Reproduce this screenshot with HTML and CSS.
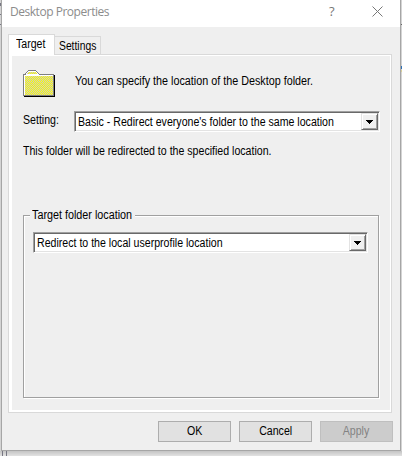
FILE: index.html
```
<!DOCTYPE html>
<html lang="en">
<head>
<meta charset="utf-8">
<title>Desktop Properties</title>
<link rel="stylesheet" href="styles.css">
</head>
<body>
<div class="dialog">
  <header class="titlebar">
    <span class="title">Desktop Properties</span>
    <span class="help">?</span>
    <svg class="close" width="11" height="11" viewBox="0 0 11 11"><path d="M.5.5l10 10M10.5.5l-10 10" stroke="#777" fill="none"/></svg>
  </header>
  <nav class="tabs">
    <div class="tab active"><span class="text">Target</span></div>
    <div class="tab"><span class="text narrow">Settings</span></div>
  </nav>
  <main class="pane">
    <div class="intro">
      <svg class="folder" width="33" height="28" viewBox="0 0 33 28" shape-rendering="crispEdges">
        <defs><pattern id="dither" width="2" height="2" patternUnits="userSpaceOnUse"><path fill="#c8c8c8" d="M0 0h2v2H0z"/><path fill="#ff0" d="M0 0h1v1H0zM1 1h1v1H1z"/></pattern></defs>
        <path fill="#000" d="M2 5h30v22H2z"/>
        <path fill="#808080" d="M1 4h1V3h1V2h1V1h1V0h8v1h1v1h1v1h1v1h15v22H0V4z"/>
        <path fill="#fff" d="M1 5h2V3h1V2h1V1h8v1h1v1h1v1h1v1h14v20H1z"/>
        <path fill="url(#dither)" d="M4 4V3h1V2h8v1h1v1zM2 6h28v19H2z"/>
        <path fill="#000" d="M1 26h30v1H1zM31 5h1v22h-1z"/>
      </svg>
      <p class="text wide">You can specify the location of the Desktop folder.</p>
    </div>
    <div class="setting">
      <label class="text">Setting:</label>
      <div class="combo">
        <span class="text">Basic - Redirect everyone's folder to the same location</span>
        <i class="drop"><svg width="7" height="4" viewBox="0 0 7 4" shape-rendering="crispEdges"><path d="M0 0h7v1H6v1H5v1H4v1H3V3H2V2H1V1H0z"/></svg></i>
      </div>
    </div>
    <p class="note"><span class="text">This folder will be redirected to the specified location.</span></p>
    <fieldset class="group">
      <legend><span class="text wide">Target folder location</span></legend>
      <div class="combo">
        <span class="text">Redirect to the local userprofile location</span>
        <i class="drop"><svg width="7" height="4" viewBox="0 0 7 4" shape-rendering="crispEdges"><path d="M0 0h7v1H6v1H5v1H4v1H3V3H2V2H1V1H0z"/></svg></i>
      </div>
    </fieldset>
  </main>
  <footer class="actions">
    <button><span class="text">OK</span></button>
    <button><span class="text">Cancel</span></button>
    <button disabled><span class="text">Apply</span></button>
  </footer>
</div>
</body>
</html>
```

FILE: styles.css
```
* { box-sizing: border-box; }
html, body { height: 100%; }
body {
  margin: 0;
  padding-left: 1px;
  overflow: hidden;
  background:
    linear-gradient(#777783, #777783) 0 3px / 1px 3px no-repeat,
    linear-gradient(#777783, #777783) 0 14px / 1px 1px no-repeat,
    linear-gradient(#777783, #777783) 0 24px / 1px 1px no-repeat,
    linear-gradient(#666, #666) 401px 24px / 1px 1px no-repeat,
    linear-gradient(#2d6fb5, #2d6fb5) 401px 66px / 1px 3px no-repeat,
    linear-gradient(#d8cf9a, #d8cf9a) 401px 70px / 1px 2px no-repeat,
    linear-gradient(#777783, #777783) 2px 451px / 1px 5px no-repeat,
    linear-gradient(#777783, #777783) 6px 451px / 1px 5px no-repeat,
    linear-gradient(#c4c4c4, #e2e2e2 5px) 0 451px / 100% 5px no-repeat, #d4d4d4;
  font: 12px/13px "Liberation Sans", Arial, sans-serif;
  color: #000;
}
p { margin: 0; }
.text {
  display: inline-block;
  white-space: nowrap;
  transform: scaleX(.883);
  transform-origin: 0 0;
}
.text.wide { transform: scaleX(.898); }
.text.narrow { transform: scaleX(.86); }
.dialog {
  width: 400px;
  height: 451px;
  background: #efefef;
  border: solid #a6a6a6;
  border-width: 0 1px 1px;
}
.titlebar {
  height: 27px;
  background: #fff;
  display: flex;
  padding: 4px 0 0 8px;
  color: #8c8c8c;
  font: 12px/15px "Open Sans", sans-serif;
}
.title { width: 319px; letter-spacing: -.47px; white-space: nowrap; }
.help { width: 43px; color: #777; font-size: 13px; }
.close { margin-top: 2px; }
.tabs { height: 27px; display: flex; align-items: flex-end; padding-left: 6px; }
.tab {
  width: 46px;
  height: 18px;
  border: 1px solid #d9d9d9;
  border-width: 1px 1px 0 0;
  padding: 3px 0 0 4px;
}
.tab.active {
  position: relative;
  z-index: 1;
  width: 47px;
  height: 21px;
  margin-bottom: -1px;
  padding: 3px 0 0 7px;
  border-left-width: 1px;
  background: #fff;
}
.pane {
  width: 384px;
  height: 359px;
  margin-left: 6px;
  border: 1px solid #d9d9d9;
  box-shadow: inset 3px 0 #fff, inset -1px 0 #fff, inset 0 1px #fff, inset 0 -2px #fff;
  padding: 15px 11px 0 14px;
}
.intro { display: flex; gap: 19px; height: 41px; }
.intro p { margin-top: 5px; }
.setting { display: flex; height: 34px; }
.setting label { width: 51px; margin-top: 3px; }
.combo {
  flex: 1;
  height: 21px;
  display: flex;
  justify-content: space-between;
  background: #fff;
  border: 1px solid;
  border-color: #a0a0a0 #fff #fff #a0a0a0;
  box-shadow: inset 1px 1px #696969, inset -1px -1px #e3e3e3;
  padding: 1px 1px 1px 3px;
}
.combo .text { margin-top: 3px; width: 0; }
.drop {
  width: 17px;
  height: 17px;
  background: #f0f0f0;
  border: 1px solid;
  border-color: #e3e3e3 #696969 #696969 #e3e3e3;
  box-shadow: inset 1px 1px #fff, inset -1px -1px #a0a0a0;
  display: flex;
  align-items: center;
  justify-content: center;
}
.note { height: 64px; }
.group {
  height: 189px;
  min-width: 0;
  margin: 0 1px 0 0;
  border: 1px solid #a0a0a0;
  box-shadow: 1px 1px #fff, inset 1px 1px #fff;
  padding: 10px 10px 0 9px;
}
.group legend {
  width: 105px;
  height: 13px;
  margin-left: -3px;
  padding: 0 0 0 2px;
  background: #efefef;
}
.actions { display: flex; justify-content: flex-end; gap: 8px; padding: 8px 7px 0 0; }
button {
  width: 73px;
  height: 21px;
  padding: 0;
  border: 1px solid #adadad;
  background: #e1e1e1;
  color: #000;
  font: inherit;
}
button .text { transform-origin: 50% 0; }
button:disabled { background: #ccc; border-color: #bfbfbf; color: #838383; }
```
